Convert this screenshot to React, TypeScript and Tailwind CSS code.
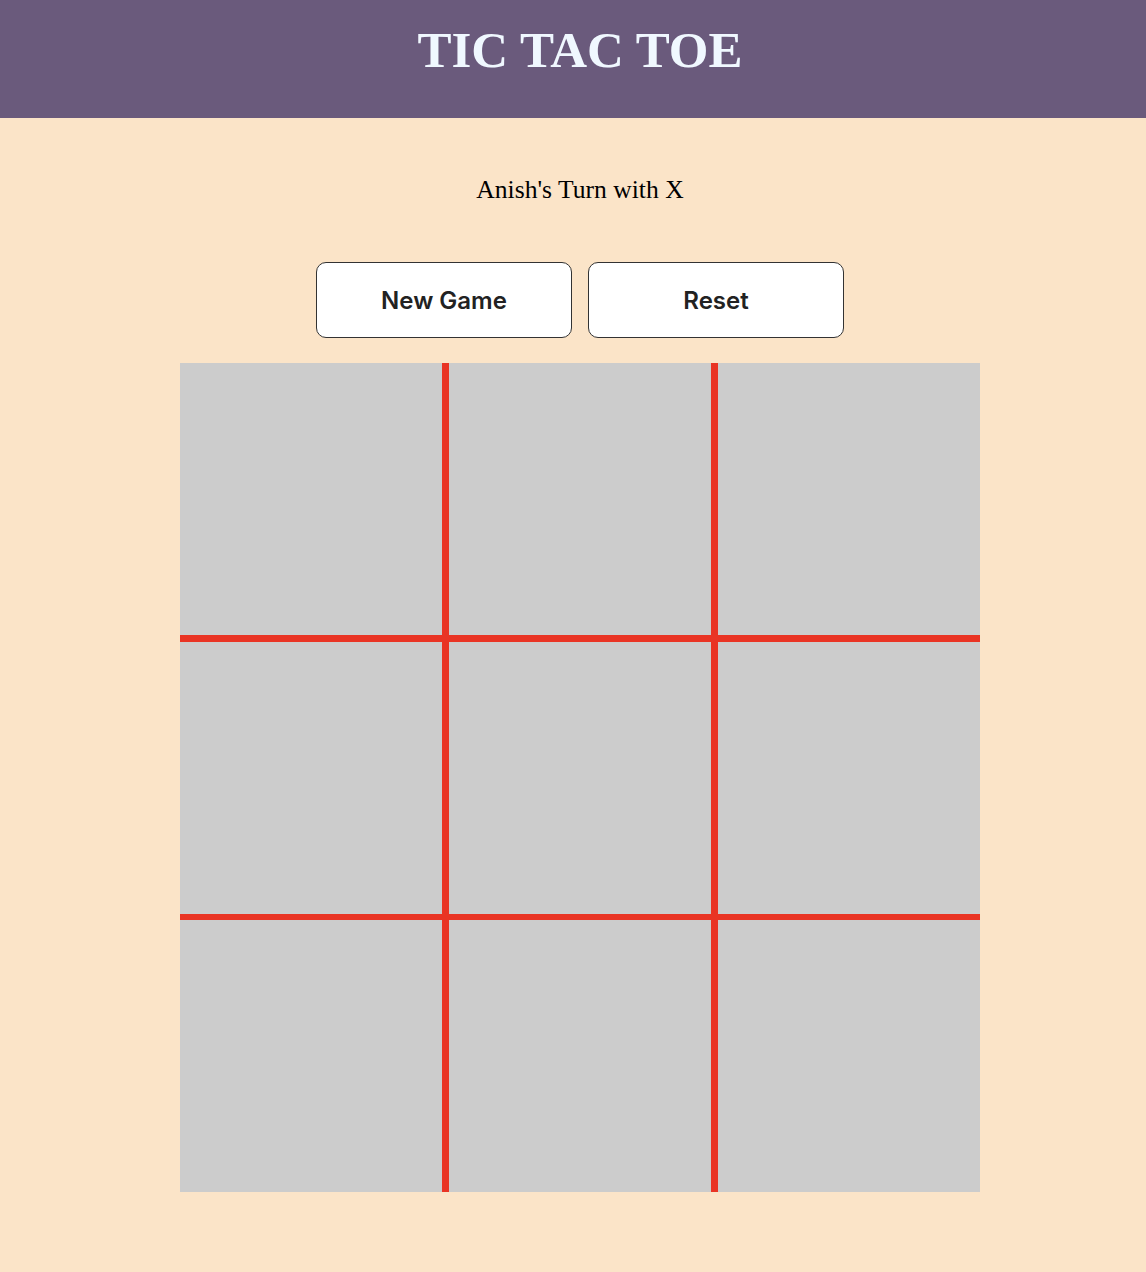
import { useState } from "react";

export default function App() {
    const [board, setBoard] = useState<string[]>(Array(9).fill(""));
    const [turn, setTurn] = useState<"X" | "O">("X");

    const play = (i: number) => {
        if (board[i]) return;
        const next = [...board];
        next[i] = turn;
        setBoard(next);
        setTurn(turn === "X" ? "O" : "X");
    }

    const reset = () => {
        setBoard(Array(9).fill(""));
        setTurn("X");
    }

    return (
        <div className="min-h-[1272px] w-full bg-[#fbe4c8] flex flex-col items-center pl-[14px]">
            <header className="-ml-[14px] w-[calc(100%+14px)] h-[118px] bg-[#6a5a7c] flex items-center justify-center pb-[17px] pl-[14px]">
                <h1 className="text-[#f0f8ff] text-[51px] font-bold leading-none font-['Liberation_Serif',serif]">TIC TAC TOE</h1>
            </header>
            <p className="mt-[55px] text-[25.6px] leading-[34px] text-black font-['Liberation_Serif',serif]">
                {turn === "X" ? "Anish's Turn with X" : "Anish's Turn with O"}
            </p>
            <div className="mt-[55px] flex gap-4">
                <button onClick={reset} className="w-[256px] h-[76px] pt-[2px] bg-white border border-[#333] rounded-[10px] text-[24px] font-semibold text-[#222] font-['Inter',sans-serif]">New Game</button>
                <button onClick={reset} className="w-[256px] h-[76px] pt-[2px] bg-white border border-[#333] rounded-[10px] text-[24px] font-semibold text-[#222] font-['Inter',sans-serif]">Reset</button>
            </div>
            <div className="mt-[25px] grid grid-cols-[262px_262px_262px] grid-rows-[272px_272px_272px] gap-x-[7px] gap-y-[6.5px] bg-[#e93424]">
                {board.map((v, i) => (
                    <div key={i} onClick={() => play(i)} className="bg-[#cccccc] flex items-center justify-center text-[120px] font-['Liberation_Sans',sans-serif] text-[#333]">
                        {v}
                    </div>
                ))}
            </div>
        </div>
    )
}
